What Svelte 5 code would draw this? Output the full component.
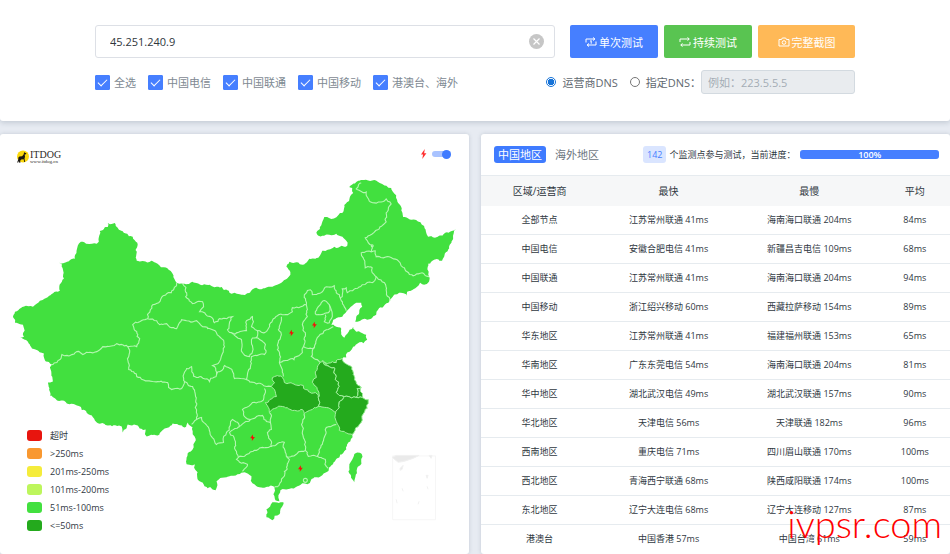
<script>
	let host = $state('45.251.240.9');
	let dns = $state('isp');
	let dnsServer = $state('');
	let region = $state('cn');
	let showBolts = $state(true);
	let progress = $state(100);

	let lines = $state([
		{ label: '全选', checked: true },
		{ label: '中国电信', checked: true },
		{ label: '中国联通', checked: true },
		{ label: '中国移动', checked: true },
		{ label: '港澳台、海外', checked: true }
	]);

	const legend = [
		{ level: 'timeout', label: '超时' },
		{ level: 'slowest', label: '>250ms' },
		{ level: 'slow', label: '201ms-250ms' },
		{ level: 'medium', label: '101ms-200ms' },
		{ level: 'good', label: '51ms-100ms' },
		{ level: 'best', label: '<=50ms' }
	];

	const rows = [
		['全部节点', '江苏常州联通 41ms', '海南海口联通 204ms', '84ms'],
		['中国电信', '安徽合肥电信 41ms', '新疆昌吉电信 109ms', '68ms'],
		['中国联通', '江苏常州联通 41ms', '海南海口联通 204ms', '94ms'],
		['中国移动', '浙江绍兴移动 60ms', '西藏拉萨移动 154ms', '89ms'],
		['华东地区', '江苏常州联通 41ms', '福建福州联通 153ms', '65ms'],
		['华南地区', '广东东莞电信 54ms', '海南海口联通 204ms', '81ms'],
		['华中地区', '湖北武汉电信 49ms', '湖北武汉联通 157ms', '90ms'],
		['华北地区', '天津电信 56ms', '天津联通 182ms', '96ms'],
		['西南地区', '重庆电信 71ms', '四川眉山联通 170ms', '100ms'],
		['西北地区', '青海西宁联通 68ms', '陕西咸阳联通 174ms', '100ms'],
		['东北地区', '辽宁大连电信 68ms', '辽宁大连移动 127ms', '87ms'],
		['港澳台', '中国香港 57ms', '中国台湾 61ms', '59ms']
	];

	const land = [
		'108 223 115 223 116 226 124 233 133 237 138 245 136 258 137 261 156 263 169 270 177 283 183 284 210 285 217 287 230 293 235 293 242 295 257 288 273 287 282 283 291 275 287 267 290 262 303 265 310 259 319 258 323 251 335 247 348 246 347 241 337 234 330 235 318 235 317 233 325 217 332 219 343 213 345 205 354 193 353 188 350 187 357 182 375 180 383 184 392 188 398 200 403 212 404 217 417 220 425 226 429 237 440 236 457 229 454 236 450 247 443 261 435 260 429 264 430 277 429 283 425 285 421 283 418 287 408 292 408 296 400 293 390 302 383 308 377 315 372 319 358 322 356 322 357 317 363 307 362 303 357 303 347 312 343 317 334 320 332 325 337 327 342 329 342 333 345 338 348 334 354 327 357 332 367 335 368 340 358 344 348 353 347 358 343 359 345 363 350 366 354 375 357 383 362 388 363 398 369 400 369 404 365 413 362 423 356 430 353 435 351 442 347 450 340 458 330 468 327 473 323 476 315 478 308 485 303 484 298 487 288 490 281 491 279 496 280 502 276 501 274 495 275 488 260 488 253 484 252 477 245 473 238 475 230 477 227 478 217 482 216 491 211 488 208 489 200 482 198 473 195 465 187 465 187 458 193 450 195 437 193 428 188 423 185 428 173 424 165 429 158 436 147 437 146 430 140 429 138 426 128 425 123 433 122 427 108 426 97 423 89 415 75 405 67 404 50 396 48 383 53 382 50 368 52 365 46 362 44 354 32 349 28 342 20 338 24 337 23 325 15 323 13 317 15 312 26 306 33 307 40 301 60 291 62 282 64 279 62 265 59 263 75 259 81 242 97 244 99 242 100 231 108 227',
		'273 503 284 503 283 507 280 515 273 521 267 518 267 510',
		'358 453 362 454 362 462 355 483 351 475 350 468 354 458'
	];

	const fastest = [
		// Hubei
		'273 378 278 376 283 378 285 383 293 384 304 386 306 390 316 393 319 398 319 407 310 411 305 414 303 410 293 411 283 407 275 409 270 413 266 403 277 397 275 390 272 387 275 383',
		// Anhui
		'323 362 316 372 317 378 313 383 318 390 319 398 319 407 327 408 336 413 340 408 345 397 337 393 340 387 336 380 337 377 335 368 330 367',
		// Jiangsu
		'323 361 328 364 337 363 338 360 343 359 345 363 350 366 354 375 357 383 362 388 358 389 357 398 345 397 337 393 340 387 336 380 337 377 335 368 330 367',
		// Shanghai
		'358 389 362 388 363 398 357 398',
		// Zhejiang
		'345 397 357 398 363 398 369 400 369 404 365 413 362 423 356 430 353 435 345 432 340 431 337 422 336 415 340 408'
	];

	const borders = [
		'177 283 174 290 167 294 159 303 153 305 148 319 133 325 137 332 140 339 137 347 128 347 117 344 103 347 97 352 83 355 77 352 72 355 62 355 57 363 51 365',
		'128 347 129 357 129 370 137 377 153 382 168 383 172 390 182 389 185 382 193 387 196 397 197 420 192 425',
		'148 319 157 321 160 325 167 324 177 329 182 320 187 321 197 321 203 327 213 330 222 339 225 347 220 362 213 366 217 375 210 382 197 378 192 367 187 369 184 375 185 382',
		'183 284 187 293 186 297 193 304 203 302 204 307 200 312 215 323 220 319 233 317 228 330 233 334 247 331 247 321 253 317 254 322 252 327 258 331 257 338 252 340 253 352 250 357 243 353 242 340 233 333',
		'257 338 266 345 265 355 252 357 251 367 247 380 235 379 233 372 225 366 217 375',
		'247 380 255 383 267 387 272 387',
		'258 331 265 333 270 325 278 316 285 315 293 312 293 308 307 305 305 295 311 290 313 295 323 292 327 287 335 286 337 293 341 298 343 297 343 289 347 288 348 293 363 285 373 283 377 277',
		'282 317 279 330 282 335 278 350 280 363 282 368 284 377',
		'280 363 297 357 303 353 304 347 306 333 303 325 308 317 308 310 307 305',
		'304 347 315 348 318 338 327 330 334 327',
		'315 348 312 357 318 360 322 365',
		'341 298 342 301 347 311',
		'324 301 330 305 329 313 317 315 316 312 319 307 324 301',
		'330 305 332 310 333 317 330 323 325 322 326 315',
		'391 301 387 290 383 282 377 277 373 273 373 268 366 268 364 258 362 253 372 252 376 251 377 257 390 257 398 260 402 266 408 272 414 276 423 273 430 277',
		'372 252 372 245 366 238 380 229 387 222 387 213 392 204 387 199 382 202 370 201 367 192 357 189 362 183',
		'265 389 262 402 253 403 243 410 245 417 251 420 257 417 263 416 267 422 271 423 270 413',
		'251 420 240 427 233 420 227 433 224 443 217 445 208 427 202 418 197 420',
		'240 427 230 433 235 440 237 452 239 458 237 460 248 465 243 472',
		'239 458 247 455 257 451 263 448 272 447 280 443 285 443 287 457 298 454 302 452 306 451 308 453 309 457 318 457 326 460 327 467 329 469',
		'271 423 272 430 268 433 272 442 272 447',
		'305 414 303 427 305 440 306 451',
		'318 457 319 455 323 445 327 428 337 425',
		'287 457 290 460 285 472 282 482 275 488'
	];

	const bolts = [[315, 325], [292, 333], [253, 438], [301, 469]];

	function noise(x, y) {
		const n = Math.sin(x * 12.9898 + y * 78.233) * 43758.5453;
		return n - Math.floor(n) - 0.5;
	}

	// splits an edge in half and nudges the middle, so borders look surveyed;
	// the nudge depends on the middle only, so neighbours share the same line
	function split(a, b, out) {
		const len = Math.hypot(b[0] - a[0], b[1] - a[1]);
		if (len > 3) {
			const mx = (a[0] + b[0]) / 2;
			const my = (a[1] + b[1]) / 2;
			const amp = Math.min(len * 0.4, 3);
			const mid = [mx + noise(mx, my) * amp, my + noise(my, mx) * amp];
			split(a, mid, out);
			split(mid, b, out);
		} else {
			out.push(b);
		}
	}

	function toPath(text, closed) {
		const n = text.split(' ').map(Number);
		const pts = [];
		for (let i = 0; i < n.length; i += 2) pts.push([n[i], n[i + 1]]);
		const out = [pts[0]];
		for (let i = 1; i < pts.length; i++) split(pts[i - 1], pts[i], out);
		if (closed) split(pts[pts.length - 1], pts[0], out);
		return 'M' + out.map((p) => p[0].toFixed(1) + ' ' + p[1].toFixed(1)).join('L') + (closed ? 'Z' : '');
	}
</script>

<div class="page">
	<header class="query">
		<div class="inner">
			<div class="bar">
				<div class="host">
					<input type="text" bind:value={host} aria-label="IP" />
					<button class="clear" onclick={() => (host = '')} aria-label="清空">
						<svg viewBox="0 0 15 15"><path d="M4.5 4.5l6 6M10.5 4.5l-6 6" /></svg>
					</button>
				</div>
				<div class="actions">
					<button class="btn once">
						<svg viewBox="0 0 12 10"><path d="M1 5.500V2h8M8 .5L10 2 8 3.500M11 4.500V8H3M4 6.500L2 8l2 1.500M5.200 4.200l1-.7v3.200" /></svg>
						单次测试
					</button>
					<button class="btn loop">
						<svg viewBox="0 0 12 10"><path d="M1 5V2h9M8.500 .5L10.300 2 8.500 3.500M11 5v3H2M3.500 6.500L1.700 8l1.800 1.500" /></svg>
						持续测试
					</button>
					<button class="btn shot">
						<svg viewBox="0 0 12 10"><path d="M1 2.500h2.500L4.300 1h3.400l.8 1.500H11V9H1z" /><circle cx="6" cy="5.500" r="1.800" /></svg>
						完整截图
					</button>
				</div>
			</div>
			<div class="options">
				<div class="lines">
					{#each lines as line}
						<label><input type="checkbox" bind:checked={line.checked} />{line.label}</label>
					{/each}
				</div>
				<div class="dns">
					<label><input type="radio" name="dns" value="isp" bind:group={dns} />运营商DNS</label>
					<label><input type="radio" name="dns" value="custom" bind:group={dns} />指定DNS：</label>
					<input class="server" type="text" placeholder="例如：223.5.5.5" aria-label="指定DNS" bind:value={dnsServer} disabled={dns !== 'custom'} />
				</div>
			</div>
		</div>
	</header>

	<main>
		<section class="card map-card">
			<div class="map-head">
				<a class="logo" href="https://www.itdog.cn/">
					<svg viewBox="0 0 14 14">
						<circle cx="7" cy="6.500" r="6" fill="#fbd80c" />
						<path d="M8.200 2l.7.700 1.500.6-.4.9-1.300.2.3 2.400-.5 1.900.6 3.200H8.300L7.600 9.300 5.200 9.500l-1 1.300.2 1.900H3.300l-.4-1.800-.7 1.600H1.100l1.100-2.800.2-2.200L3.400 6.600l2.700-.4 1.500-1.800z" fill="#1a1710" />
					</svg>
					<span class="brand"><strong>ITDOG</strong><small>www.itdog.cn</small></span>
				</a>
				<label class="switch">
					<svg viewBox="0 0 8 12"><path d="M5.500 0L1 6.500h2.500L2.500 12 7.500 5H4.800z" /></svg>
					<input type="checkbox" aria-label="显示故障节点" bind:checked={showBolts} />
				</label>
			</div>

			<svg class="map" viewBox="0 174 470 360">
				<g class="inset">
					<path class="frame" d="M393.500 456.500h43v64h-43z" />
					<path class="coast" d="M393 458l4-2h23l-6 3-9 3-6 1zM430 456l2 3 1-3zM401 469l3-3-1 4-2 1zM427 476l1 3 1-3zM403 489l1 3M428 487l1 3M397 500l1 4M420 502l-1 3" />
				</g>
				{#each land as shape}
					<path class="land" d={toPath(shape, true)} />
				{/each}
				{#each borders as line}
					<path class="border" d={toPath(line, false)} />
				{/each}
				{#each fastest as shape}
					<path class="fast" d={toPath(shape, true)} />
				{/each}
				<circle class="border" cx="306" cy="481" r="2" />
				<circle class="border" cx="373" cy="246" r="1" />
				{#if showBolts}
					{#each bolts as [x, y]}
						<path class="bolt" transform="translate({x} {y})" d="M.4-3L-2.300.9h1.800L-.6 3.500 2.500-.5H.6z" />
					{/each}
				{/if}
			</svg>

			<ul class="legend">
				{#each legend as { level, label }}
					<li><span class="swatch {level}"></span>{label}</li>
				{/each}
			</ul>
		</section>

		<section class="card result">
			<div class="result-head">
				<div class="tabs">
					<button class:active={region === 'cn'} onclick={() => (region = 'cn')}>中国地区</button>
					<button class:active={region === 'world'} onclick={() => (region = 'world')}>海外地区</button>
				</div>
				<span class="count">142</span>
				<span class="status">个监测点参与测试，当前进度：</span>
				<div class="progress"><div class="fill" style="width: {progress}%">{progress}%</div></div>
			</div>
			<table>
				<thead>
					<tr><th class="area">区域/运营商</th><th class="node">最快</th><th class="node">最慢</th><th>平均</th></tr>
				</thead>
				<tbody>
					{#each rows as row}
						<tr>
							{#each row as cell}<td>{cell}</td>{/each}
						</tr>
					{/each}
				</tbody>
			</table>
		</section>
	</main>
	<div class="watermark">ivpsr.com</div>
</div>

<style>
	:global(body) {
		background: #e7ebf2;
	}

	.page {
		position: relative;
		display: flex;
		flex-direction: column;
		gap: 13px;
		min-height: 100vh;
		overflow: hidden;
		font-family: "Open Sans", "Noto Sans CJK SC", sans-serif;
		font-size: 11px;
		color: #2f383f;
	}

	button, input {
		font: inherit;
		margin: 0;
		box-sizing: border-box;
	}

	button {
		border: none;
		padding: 0;
		cursor: pointer;
	}

	.query {
		background: #fff;
		padding: 25px 0 27px;
		border-radius: 0 0 3px 3px;
		box-shadow: 0 2px 5px rgba(60, 80, 100, 0.2);
	}

	.inner {
		width: 80%;
		margin: 0 auto;
	}

	.bar {
		display: flex;
		gap: 15px;
	}

	.host {
		flex: 1;
		display: flex;
		align-items: center;
		height: 33px;
		box-sizing: border-box;
		border: 1px solid #dde0e6;
		border-radius: 3px;
		padding-right: 10px;
	}

	.host input {
		flex: 1;
		min-width: 0;
		height: 100%;
		border: none;
		outline: none;
		background: none;
		padding: 0 14px;
		color: #30363c;
	}

	.clear {
		width: 15px;
		height: 15px;
		border-radius: 50%;
		background: #c6c6c6;
	}

	.clear svg {
		display: block;
		fill: none;
		stroke: #fff;
		stroke-width: 1.2;
	}

	.actions {
		display: flex;
		gap: 6px;
	}

	.btn {
		display: flex;
		align-items: center;
		justify-content: center;
		gap: 2px;
		width: 88px;
		height: 33px;
		border-radius: 2px;
		color: #fff;
	}

	.btn svg {
		width: 12px;
		height: 10px;
		fill: none;
		stroke: #fff;
		stroke-linejoin: round;
	}

	.once { background: #467fff; }
	.loop { background: #59c451; }

	.shot {
		width: 97px;
		background: #ffb957;
	}

	.options {
		display: flex;
		justify-content: space-between;
		align-items: center;
		margin-top: 12px;
	}

	.lines {
		display: flex;
		gap: 12px;
		color: #7e8992;
	}

	label {
		display: flex;
		align-items: center;
	}

	.lines input {
		appearance: none;
		width: 15px;
		height: 15px;
		margin-right: 4px;
		border: 1px solid #467fff;
		border-radius: 1px;
		display: grid;
		place-items: center;
	}

	.lines input:checked {
		background: #467fff;
	}

	.lines input:checked::before {
		content: '';
		width: 8px;
		height: 4px;
		border-left: 1px solid #fff;
		border-bottom: 1px solid #fff;
		transform: translateY(-1px) rotate(-45deg);
	}

	.dns {
		display: flex;
		align-items: center;
		color: #5f6870;
	}

	.dns label + label {
		margin-left: 12px;
	}

	.dns input[type='radio'] {
		appearance: none;
		width: 10px;
		height: 10px;
		margin-right: 6px;
		border: 1px solid #767676;
		border-radius: 50%;
	}

	.dns input[type='radio']:checked {
		border-color: #1673d8;
		background: radial-gradient(#1673d8 0 3px, #fff 3px);
	}

	.server {
		width: 154px;
		height: 24px;
		padding: 0 6px;
		border: 1px solid #d3dae0;
		border-radius: 3px;
		background: #e9ecef;
		color: #495057;
	}

	.server::placeholder {
		color: #a4adb5;
	}

	main {
		flex: 1;
		display: grid;
		grid-template-columns: 1fr 1fr;
		gap: 12px;
	}

	.card {
		background: #fff;
		border-radius: 3px;
		box-shadow: 0 0 4px rgba(60, 80, 100, 0.2);
	}

	.map-card {
		position: relative;
	}

	.map-head {
		display: flex;
		justify-content: space-between;
		align-items: center;
		height: 40px;
		padding: 0 18px 0 16px;
	}

	.logo {
		display: flex;
		align-items: center;
		color: #2c2926;
		text-decoration: none;
		padding-top: 6px;
	}

	.logo svg {
		width: 14px;
		height: 14px;
	}

	.brand {
		display: flex;
		flex-direction: column;
		font-family: "Liberation Serif", serif;
	}

	.brand strong {
		font-size: 10px;
		line-height: 9px;
		font-weight: normal;
	}

	.brand small {
		font-size: 5px;
		line-height: 5px;
	}

	.switch {
		gap: 5px;
	}

	.switch svg {
		width: 7px;
		height: 10px;
		fill: #ff3030;
	}

	.switch input {
		appearance: none;
		display: flex;
		align-items: center;
		width: 19px;
		height: 6px;
		border-radius: 3px;
		background: #ccd3dc;
	}

	.switch input::before {
		content: '';
		width: 9px;
		height: 9px;
		border-radius: 50%;
		background: #8f99a6;
	}

	.switch input:checked {
		justify-content: flex-end;
		background: #a9c3ff;
	}

	.switch input:checked::before {
		background: #3f7bff;
	}

	.map {
		display: block;
		width: 100%;
	}

	.land { fill: #42e03f; }

	.border {
		fill: none;
		stroke: #b4f7b1;
		stroke-width: 1.1;
	}

	.fast {
		fill: #24aa1d;
		stroke: #a6f0a2;
		stroke-width: 1;
	}

	.bolt { fill: #f31309; }

	.frame {
		fill: none;
		stroke: #f6f6f6;
	}

	.coast {
		fill: #eaeaea;
		stroke: #f1f1f1;
	}

	.legend {
		position: absolute;
		left: 27px;
		bottom: 20px;
		margin: 0;
		padding: 0;
		list-style: none;
		font-size: 9px;
	}

	.legend li {
		display: flex;
		align-items: center;
		gap: 8px;
		height: 18px;
	}

	.swatch {
		width: 15px;
		height: 11px;
		border-radius: 3px;
	}

	.timeout { background: #e8150e; }
	.slowest { background: #f99830; }
	.slow { background: #f5ec3b; }
	.medium { background: #bdf65c; }
	.good { background: #42e03f; }
	.best { background: #24aa1d; }

	.result-head {
		display: flex;
		align-items: center;
		height: 41px;
		padding: 0 11px 0 13px;
		font-size: 9px;
	}

	.tabs {
		display: flex;
		gap: 5px;
		margin-right: 40px;
		font-size: 11px;
	}

	.tabs button {
		height: 17px;
		line-height: 17px;
		padding: 0 4px;
		border-radius: 3px;
		background: none;
		color: #6d767e;
	}

	.tabs .active {
		background: #3f7bff;
		color: #fff;
	}

	.count {
		padding: 0 4px;
		line-height: 17px;
		border-radius: 3px;
		background: #dae5ff;
		color: #467fff;
		margin-right: 3px;
	}

	.status {
		white-space: nowrap;
	}

	.progress {
		flex: 1;
		margin-left: 5px;
		border-radius: 3px;
		background: #e9ecef;
	}

	.fill {
		height: 9px;
		line-height: 9px;
		border-radius: 3px;
		background: #467fff;
		color: #fff;
		font-weight: 600;
		text-align: center;
	}

	table {
		width: 100%;
		table-layout: fixed;
		border-collapse: separate;
		border-spacing: 0;
		text-align: center;
		font-size: 9px;
	}

	th, td {
		padding: 0;
		height: 28px;
		line-height: 14px;
		border-bottom: 1px solid #e6ebef;
	}

	th {
		height: 30px;
		font-size: 10px;
		font-weight: normal;
		background: #f6f7f8;
		border-top: 1px solid #e6ebef;
		border-bottom: none;
	}

	tr:last-child td {
		border-bottom: none;
	}

	.area { width: 25%; }
	.node { width: 30%; }

	.watermark {
		position: absolute;
		right: 8px;
		bottom: 9px;
		font-family: Lato, "Open Sans", sans-serif;
		font-weight: 300;
		font-size: 38px;
		line-height: 44px;
		color: #f00;
		pointer-events: none;
	}
</style>
